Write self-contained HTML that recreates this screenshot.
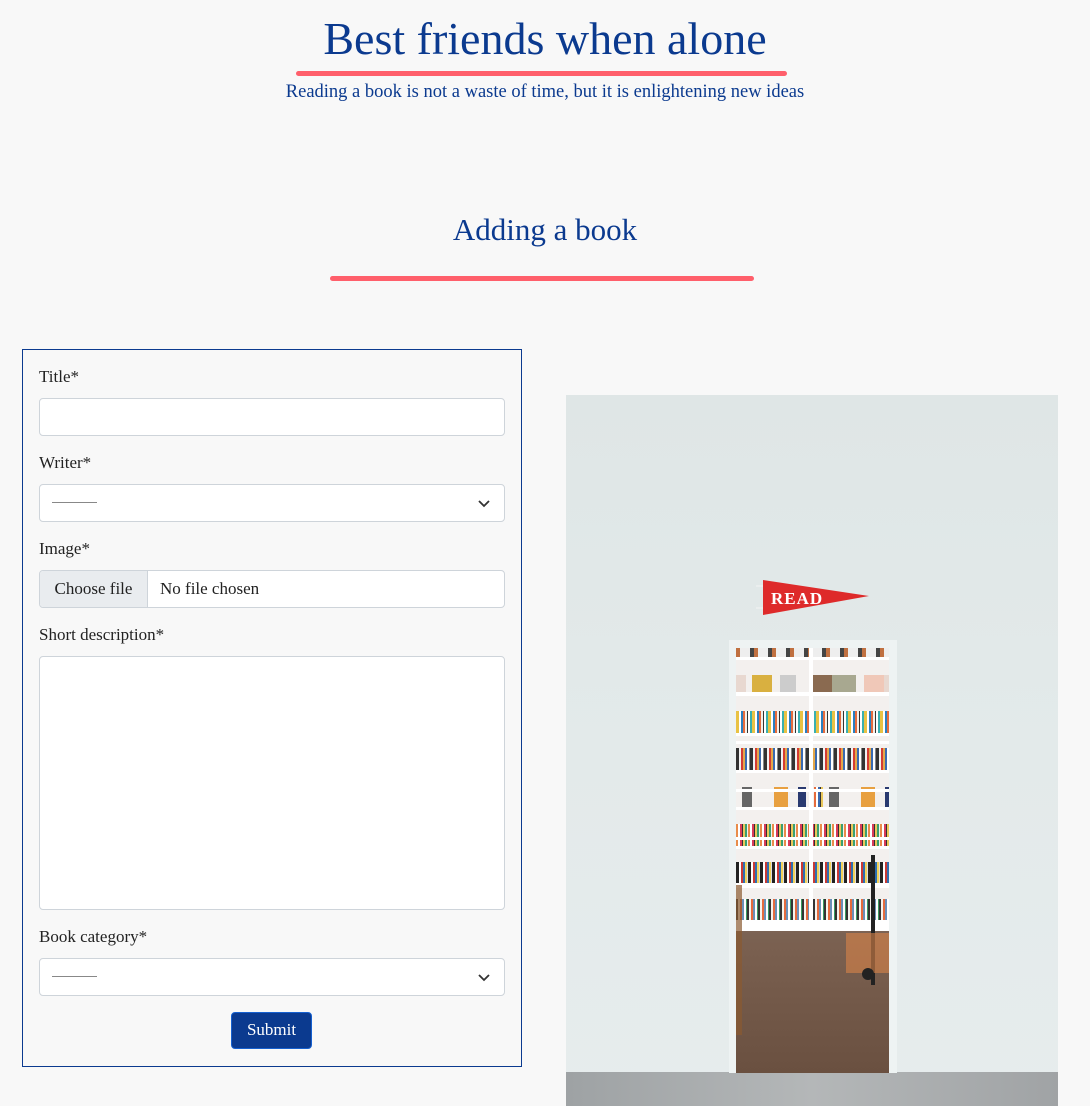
<!DOCTYPE html>
<html><head><meta charset="utf-8"><style>
*{box-sizing:border-box;margin:0;padding:0}
body{width:1090px;height:1106px;background:#f8f8f8;font-family:"Liberation Serif",serif;position:relative;overflow:hidden;color:#222}
.a{position:absolute}
h1{position:absolute;left:0;width:1090px;top:12px;text-align:center;font-weight:normal;font-size:46px;color:#0b3a8f;line-height:54px}
.sub{left:0;width:1090px;top:82px;text-align:center;font-size:18.5px;color:#0b3a8f}
.bar{background:#ff5f6b;height:5px;border-radius:3px}
h2{position:absolute;left:0;width:1090px;top:212px;text-align:center;font-weight:normal;font-size:31px;color:#0b3a8f}
.form{left:22px;top:349px;width:500px;height:718px;border:1px solid #0b3a8f}
.lbl{font-size:17px;color:#222;left:16px}
.inp{left:16px;width:466px;background:#fff;border:1px solid #ced4da;border-radius:4px}
.dash{left:12px;top:17px;width:45px;height:1px;background:#888}
.chev{right:14px;top:13px}
.btn{left:208px;top:662px;width:81px;height:37px;background:#0b3a8f;border:1px solid #1560d0;border-radius:4px;color:#fff;font-size:17px;text-align:center;line-height:34px}
.row{position:absolute;left:0;width:153px}
</style></head><body>
<h1>Best friends when alone</h1>
<div class="a bar" style="left:296px;top:71px;width:491px"></div>
<div class="a sub">Reading a book is not a waste of time, but it is enlightening new ideas</div>
<h2>Adding a book</h2>
<div class="a bar" style="left:330px;top:276px;width:424px"></div>

<div class="a form">
<div class="a lbl" style="top:17px">Title*</div>
<div class="a inp" style="top:48px;height:38px"></div>
<div class="a lbl" style="top:103px">Writer*</div>
<div class="a inp" style="top:134px;height:38px"><div class="a dash"></div><svg class="a chev" width="12" height="10" viewBox="0 0 12 10"><path d="M1 3l5 5 5-5" fill="none" stroke="#333" stroke-width="1.8"/></svg></div>
<div class="a lbl" style="top:189px">Image*</div>
<div class="a inp" style="top:220px;height:38px;overflow:hidden"><div class="a" style="left:0;top:0;width:108px;height:38px;background:#e9ecef;border-right:1px solid #ced4da;font-size:17px;line-height:36px;text-align:center;color:#222">Choose file</div><div class="a" style="left:120px;top:0;font-size:17px;line-height:36px">No file chosen</div></div>
<div class="a lbl" style="top:275px">Short description*</div>
<div class="a inp" style="top:306px;height:254px"></div>
<div class="a lbl" style="top:577px">Book category*</div>
<div class="a inp" style="top:608px;height:38px"><div class="a dash"></div><svg class="a chev" width="12" height="10" viewBox="0 0 12 10"><path d="M1 3l5 5 5-5" fill="none" stroke="#333" stroke-width="1.8"/></svg></div>
<div class="a btn">Submit</div>
</div>

<div class="a" style="left:566px;top:395px;width:492px;height:711px;background:linear-gradient(180deg,#dfe6e6 0%,#e3eaea 50%,#e6eced 100%);overflow:hidden">
 <div class="a" style="left:0;top:677px;width:492px;height:34px;background:linear-gradient(90deg,#9ea2a4,#b4b7b8,#a0a3a5)"></div>
 <div class="a" style="left:163px;top:245px;width:168px;height:433px;background:#eef3f3"></div>
 <div class="a" style="left:170px;top:253px;width:153px;height:425px;background:linear-gradient(180deg,#a8a4a0 0%,#8c8078 35%,#7a6050 70%,#6a5040 100%)"></div>
 <div class="a" style="left:170px;top:253px;width:153px;height:283px;background:#f3f0ee">
  <div class="row" style="top:0;height:9px;background:repeating-linear-gradient(90deg,#c07040 0 4px,#eee 4px 14px,#444 14px 18px)"></div>
  <div class="row" style="top:27px;height:18px;background:repeating-linear-gradient(90deg,#e8d8d0 0 10px,#f3f0ee 10px 16px,#d9b040 16px 36px,#f3f0ee 36px 44px,#ccc 44px 60px,#f3f0ee 60px 76px,#8a6a50 76px 96px,#a8a890 96px 120px,#f3f0ee 120px 128px,#f0c8b8 128px 148px,#f3f0ee 148px)"></div>
  <div class="row" style="top:63px;height:22px;background:repeating-linear-gradient(90deg,#e9c244 0 3px,#fff 3px 5px,#2a7fc0 5px 7px,#e56b3d 7px 9px,#f4f0ea 9px 11px,#333 11px 12px,#fff 12px 14px,#3ab0b0 14px 16px)"></div>
  <div class="row" style="top:100px;height:22px;background:repeating-linear-gradient(90deg,#333 0 3px,#f2f2f2 3px 5px,#d43c34 5px 7px,#e4a74a 7px 9px,#3a6ab0 9px 11px,#fff 11px 13px,#888 13px 14px)"></div>
  <div class="row" style="top:139px;height:20px;background:repeating-linear-gradient(90deg,#f3f0ee 0 6px,#666 6px 16px,#f3f0ee 16px 38px,#e8a040 38px 52px,#f3f0ee 52px 62px,#2a3a70 62px 70px,#f3f0ee 70px 78px,#e56b3d 78px 80px,#fff 80px 82px,#3a6ab0 82px 84px,#333 84px 85px,#eac75a 85px 87px)"></div>
  <div class="row" style="top:176px;height:22px;background:repeating-linear-gradient(90deg,#e98c4a 0 2px,#fff 2px 4px,#d83b5a 4px 6px,#333 6px 7px,#eac75a 7px 9px,#3aa070 9px 11px,#f3f0ee 11px 12px)"></div>
  <div class="row" style="top:214px;height:21px;background:repeating-linear-gradient(90deg,#222 0 3px,#fff 3px 5px,#c93a35 5px 7px,#2f6fb0 7px 9px,#f2d25a 9px 11px,#ddd 11px 12px)"></div>
  <div class="row" style="top:251px;height:21px;background:repeating-linear-gradient(90deg,#333 0 2px,#f6f3ee 2px 4px,#e56b3d 4px 6px,#6b8fb8 6px 8px,#fff 8px 10px,#3a9a60 10px 11px)"></div>
  <div class="a" style="left:0;top:0;width:153px;height:283px;background:repeating-linear-gradient(180deg,transparent 0 45px,#fff 45px 48px,transparent 48px 48px),linear-gradient(transparent,transparent)"></div>
  <div class="row" style="top:44px;height:3px;background:#fff"></div>
  <div class="row" style="top:85px;height:3px;background:#fff"></div>
  <div class="row" style="top:122px;height:3px;background:#fff"></div>
  <div class="row" style="top:159px;height:3px;background:#fff"></div>
  <div class="row" style="top:198px;height:3px;background:#fff"></div>
  <div class="row" style="top:235px;height:3px;background:#fff"></div>
  <div class="row" style="top:272px;height:11px;background:#fff"></div>
  <div class="row" style="top:9px;height:3px;background:#fff"></div>
  <div class="a" style="left:73px;top:0;width:4px;height:283px;background:#fff"></div>
 </div>
 <div class="a" style="left:170px;top:490px;width:6px;height:150px;background:#8a5a30;opacity:.7"></div>
 <div class="a" style="left:305px;top:460px;width:4px;height:130px;background:#222"></div>
 <div class="a" style="left:280px;top:538px;width:43px;height:40px;background:#d8844a;opacity:.6"></div>
 <div class="a" style="left:296px;top:573px;width:12px;height:12px;border-radius:50%;background:#222"></div>
 <svg class="a" style="left:190px;top:183px" width="116" height="40" viewBox="0 0 116 40"><line x1="0" y1="8" x2="8" y2="8" stroke="#f4f4f4"/><line x1="0" y1="30" x2="8" y2="30" stroke="#f4f4f4"/><path d="M7 2L113 18L7 37Z" fill="#de2a2a"/><text x="15" y="26" font-family="Liberation Serif,serif" font-weight="bold" font-size="17" fill="#fff" letter-spacing="1">READ</text></svg>
</div>
</body></html>
